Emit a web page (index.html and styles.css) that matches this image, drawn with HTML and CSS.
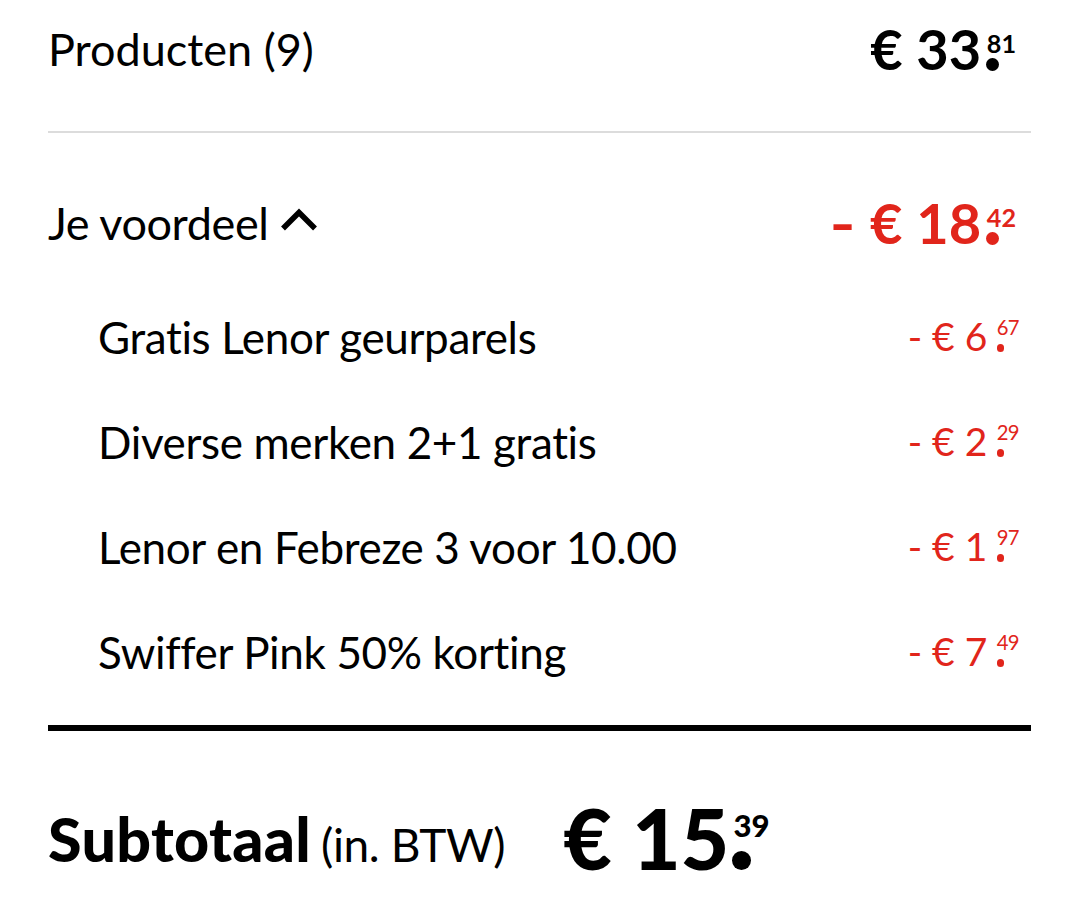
FILE: index.html
```html
<!DOCTYPE html>
<html lang="nl">
<head>
<meta charset="utf-8">
<title>Winkelmand overzicht</title>
<link rel="stylesheet" href="styles.css">
</head>
<body>
<section class="summary">
  <div class="row row-top">
    <span class="label">Producten (9)</span>
    <span class="price price-lg"><span class="int">€ 33</span><span class="dec"><span class="cents">81</span></span></span>
  </div>
  <div class="divider"></div>
  <div class="row row-voordeel">
    <span class="label toggle">Je voordeel
      <svg class="chevron" width="38" height="24" viewBox="0 0 38 24" aria-hidden="true"><polyline points="3,20.5 19,4.5 35,20.5" fill="none" stroke="#000" stroke-width="5.5"/></svg>
    </span>
    <span class="price price-lg red"><span class="int"><span class="minus">-</span> € 18</span><span class="dec"><span class="cents">42</span></span></span>
  </div>
  <ul class="discounts">
    <li class="row row-sub"><span class="label">Gratis Lenor geurparels</span><span class="price price-sm red"><span class="int">- € 6</span><span class="dec"><span class="cents">67</span></span></span></li>
    <li class="row row-sub"><span class="label">Diverse merken 2+1 gratis</span><span class="price price-sm red"><span class="int">- € 2</span><span class="dec"><span class="cents">29</span></span></span></li>
    <li class="row row-sub"><span class="label">Lenor en Febreze 3 voor 10.00</span><span class="price price-sm red"><span class="int">- € 1</span><span class="dec"><span class="cents">97</span></span></span></li>
    <li class="row row-sub"><span class="label">Swiffer Pink 50% korting</span><span class="price price-sm red"><span class="int">- € 7</span><span class="dec"><span class="cents">49</span></span></span></li>
  </ul>
  <div class="rule"></div>
  <div class="row row-total">
    <span class="total-label"><strong>Subtotaal</strong><span class="btw">(in. BTW)</span></span>
    <span class="price price-xl"><span class="int">€ 15</span><span class="dec"><span class="cents">39</span></span></span>
  </div>
</section>
</body>
</html>
```

FILE: styles.css
```css
html, body {
  margin: 0;
  padding: 0;
  background: #fff;
}

body {
  font-family: "Lato", "Open Sans", sans-serif;
  color: #000;
}

.summary {
  padding: 0 49px 0 48px;
}

.row {
  display: flex;
  align-items: center;
  justify-content: space-between;
  line-height: 1;
}

.label {
  font-size: 45px;
  font-weight: 400;
}

.row-top {
  height: 98px;
}

.divider {
  height: 2px;
  background: #dcdcdc;
  margin-top: 33px;
}

.row-voordeel {
  margin-top: 45px;
  height: 90px;
}

.toggle {
  display: inline-flex;
  align-items: center;
  letter-spacing: -0.4px;
}

.chevron {
  margin-left: 12px;
  margin-top: -6px;
}

.discounts {
  list-style: none;
  margin: 16px 0 0;
  padding: 0;
}

.row-sub {
  height: 105px;
  padding-left: 50px;
}

.row-sub .label {
  font-size: 44px;
  letter-spacing: -0.35px;
}

.rule {
  height: 6px;
  background: #000;
  margin-top: 21px;
}

.row-total {
  margin-top: 67px;
  height: 80px;
  justify-content: flex-start;
}

.total-label {
  display: inline-flex;
  align-items: baseline;
}

.total-label strong {
  font-size: 61px;
  font-weight: 900;
  letter-spacing: 0.3px;
}

.btw {
  font-size: 46px;
  font-weight: 400;
  margin-left: 10px;
  letter-spacing: -0.4px;
}

/* price with raised cents and dot */
.price {
  display: inline-flex;
  line-height: 1;
  font-weight: 700;
  white-space: pre;
}

.price .dec {
  position: relative;
  margin-left: 0.1em;
}

.price .cents {
  display: block;
}

.price .dec::after {
  content: "";
  position: absolute;
  left: -0.02em;
  bottom: 0.115em;
  width: 0.23em;
  height: 0.23em;
  border-radius: 50%;
  background: currentColor;
}

.price-lg {
  font-size: 56px;
  padding-right: 15px;
}

.price-lg .cents {
  font-size: 0.45em;
  margin-top: 0.4em;
}

.minus {
  display: inline-block;
  transform: scaleX(1.25);
  margin-right: 4px;
}

.price-sm {
  font-size: 39px;
  font-weight: 400;
  padding-right: 12px;
}

.price-sm .dec {
  margin-left: 0.24em;
}

.price-sm .cents {
  font-size: 0.52em;
  margin-top: 0;
  letter-spacing: -0.6px;
}

.price-sm .dec::after {
  left: 0;
  width: 0.2em;
  height: 0.2em;
}

.price-xl {
  font-size: 84px;
  font-weight: 900;
  margin-left: 58px;
}

.price-xl .dec {
  margin-left: 0.05em;
}

.price-xl .cents {
  font-size: 0.37em;
  margin-top: 0.44em;
}

.red {
  color: #e1251b;
}
```
